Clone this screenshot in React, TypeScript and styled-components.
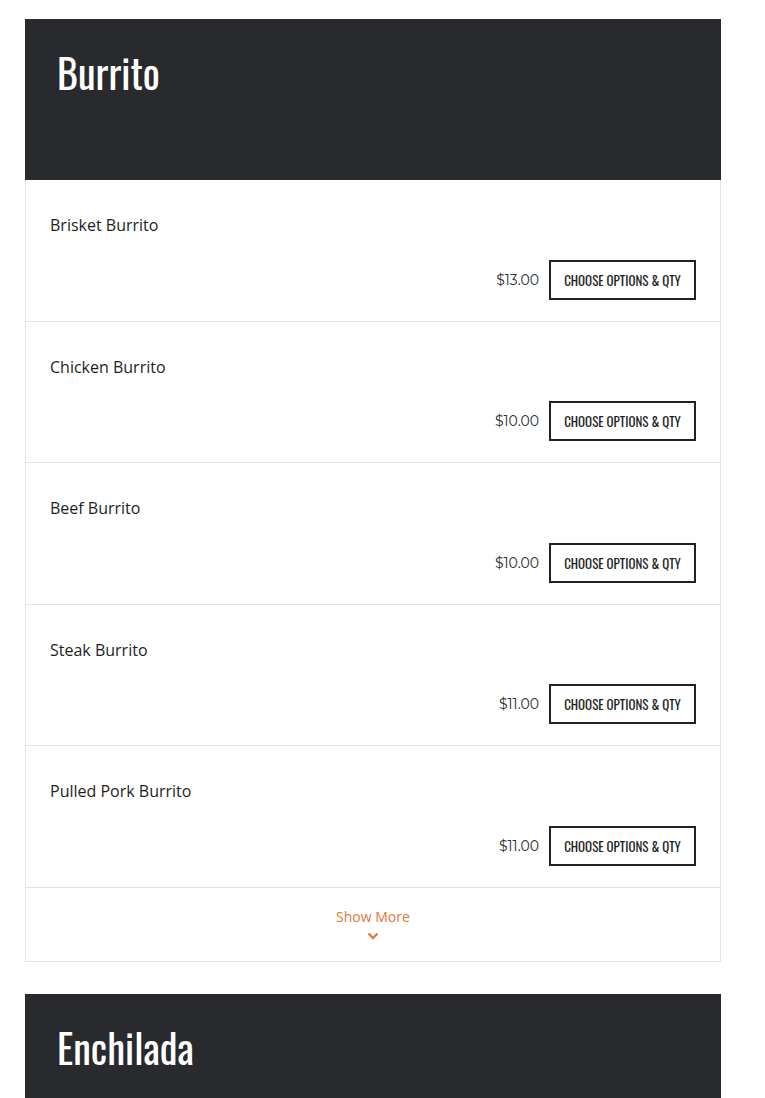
import React from 'react';
import styled, { createGlobalStyle } from 'styled-components';

const GlobalStyle = createGlobalStyle`
    body {
        margin: 0;
        background: #ffffff;
        font-family: 'Open Sans', 'Noto Sans', sans-serif;
        color: #222222;
    }
`;

const condensed = `'Oswald', 'Liberation Sans Narrow', 'DejaVu Sans Condensed', 'Roboto Condensed', sans-serif`;

interface MenuItem {
    name: string;
    price: string;
}

interface MenuCategory {
    title: string;
    items: MenuItem[];
}

const categories: MenuCategory[] = [
    {
        title: 'Burrito',
        items: [
            { name: 'Brisket Burrito', price: '$13.00' },
            { name: 'Chicken Burrito', price: '$10.00' },
            { name: 'Beef Burrito', price: '$10.00' },
            { name: 'Steak Burrito', price: '$11.00' },
            { name: 'Pulled Pork Burrito', price: '$11.00' },
        ],
    },
    { title: 'Enchilada', items: [] },
];

const Page = styled.main`
    width: 696px;
    padding: 19px 44px 0 25px;
    display: flex;
    flex-direction: column;
    gap: 32px;
`;

const Section = styled.section`
    display: flex;
    flex-direction: column;
`;

const Header = styled.header`
    background: #282a2d;
    height: 161px;
    padding: 25px 32px 0;
    box-sizing: border-box;
`;

const Title = styled.h2`
    margin: 0;
    font-family: ${condensed};
    font-weight: 400;
    font-size: 40px;
    line-height: 56px;
    color: #ffffff;
`;

const List = styled.div`
    border-left: 1px solid #e2e2e2;
    border-right: 1px solid #e2e2e2;
    border-bottom: 1px solid #e2e2e2;
`;

const Item = styled.div`
    display: flex;
    flex-direction: column;
    gap: 22px;
    padding: 34px 24px 21px 24px;
    border-bottom: 1px solid #e2e2e2;
`;

const ItemName = styled.div`
    font-size: 16px;
    line-height: 23.6px;
    color: #1e1e1e;
`;

const BuyRow = styled.div`
    display: flex;
    justify-content: flex-end;
    align-items: center;
    gap: 10px;
`;

const Price = styled.span`
    font-family: 'Montserrat', 'Lato', 'Noto Sans', sans-serif;
    font-size: 14px;
    color: #2a2a2a;
`;

const OptionsButton = styled.button`
    height: 40px;
    width: 147px;
    padding: 0;
    background: #ffffff;
    border: 2px solid #222222;
    font-family: ${condensed};
    font-size: 13px;
    color: #1e1e1e;
    text-transform: uppercase;
    cursor: pointer;
`;

const ShowMore = styled.button`
    display: flex;
    flex-direction: column;
    align-items: center;
    gap: 6px;
    width: 100%;
    height: 73px;
    padding: 20px 0 0;
    border: none;
    background: none;
    font-family: 'Open Sans', 'Noto Sans', sans-serif;
    font-size: 14px;
    line-height: 18px;
    color: #e0793a;
    cursor: pointer;
`;

const Chevron = () => (
    <svg width="12" height="8" viewBox="0 0 12 8" aria-hidden="true">
        <path d="M1.5 1.5 L6 6 L10.5 1.5" fill="none" stroke="#e0793a" strokeWidth="2.4" />
    </svg>
);

export default function App() {
    return (
        <>
            <GlobalStyle />
            <Page>
                {categories.map((category) => (
                    <Section key={category.title}>
                        <Header>
                            <Title>{category.title}</Title>
                        </Header>
                        {category.items.length > 0 && (
                            <List>
                                {category.items.map((item) => (
                                    <Item key={item.name}>
                                        <ItemName>{item.name}</ItemName>
                                        <BuyRow>
                                            <Price>{item.price}</Price>
                                            <OptionsButton>Choose Options &amp; Qty</OptionsButton>
                                        </BuyRow>
                                    </Item>
                                ))}
                                <ShowMore>
                                    Show More
                                    <Chevron />
                                </ShowMore>
                            </List>
                        )}
                    </Section>
                ))}
            </Page>
        </>
    );
}
